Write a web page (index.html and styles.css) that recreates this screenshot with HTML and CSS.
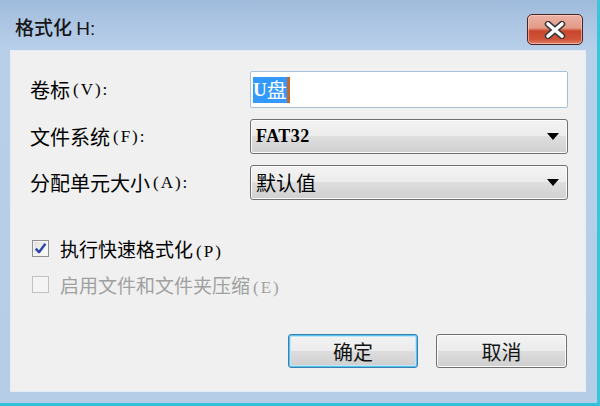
FILE: index.html
```html
<!DOCTYPE html>
<html lang="zh-CN">
<head>
<meta charset="utf-8">
<title>格式化 H:</title>
<link rel="stylesheet" href="styles.css">
</head>
<body>
<div class="window">
  <div class="titlebar">
    <div class="title">格式化 <span class="lat">H:</span></div>
    <div class="close">
      <svg width="24" height="18" viewBox="0 0 24 18">
        <path d="M5 3 L19 15 M19 3 L5 15" stroke="#3a3a3a" stroke-width="6.5" stroke-linecap="round" fill="none"/>
        <path d="M5 3 L19 15 M19 3 L5 15" stroke="#ffffff" stroke-width="3.6" stroke-linecap="round" fill="none"/>
      </svg>
    </div>
  </div>
  <div class="client">
    <div class="form">
      <div class="lbl">卷标<span class="mn">(V):</span></div>
      <div class="input"><span class="sel"><span class="u">U</span>盘</span><span class="caret"></span></div>
      <div class="lbl">文件系统<span class="mn">(F):</span></div>
      <div class="combo"><span class="val mono">FAT32</span><span class="arrow"></span></div>
      <div class="lbl">分配单元大小<span class="mn">(A):</span></div>
      <div class="combo"><span class="val">默认值</span><span class="arrow"></span></div>
    </div>
    <div class="checks">
      <div class="chk">
        <span class="box checked">
          <svg width="13" height="13" viewBox="0 0 13 13"><path d="M1.8 6.6 L5 10.2 L11.4 1.8" stroke="#2a46a8" stroke-width="2.4" fill="none" stroke-linejoin="round"/></svg>
        </span>
        <span class="ctext">执行快速格式化<span class="mn">(P)</span></span>
      </div>
      <div class="chk disabled">
        <span class="box"></span>
        <span class="ctext">启用文件和文件夹压缩<span class="mn">(E)</span></span>
      </div>
    </div>
    <div class="buttons">
      <div class="btn default">确定</div>
      <div class="btn">取消</div>
    </div>
  </div>
</div>
</body>
</html>
```

FILE: styles.css
```css
html, body {
  margin: 0;
  padding: 0;
}
body {
  width: 600px;
  height: 406px;
  overflow: hidden;
  font-family: "Noto Sans CJK SC", "Liberation Sans", sans-serif;
}
.window {
  box-sizing: border-box;
  width: 600px;
  height: 406px;
  background: linear-gradient(to bottom, #9fbbdb 0px, #adc6e3 25px, #b8cfea 50px, #b6cde8 100%);
  border-right: 3px solid #3cc4dc;
  border-bottom: 3px solid #31c2da;
  display: flex;
  flex-direction: column;
}
.titlebar {
  height: 50px;
  display: flex;
  align-items: flex-start;
  justify-content: space-between;
  flex-shrink: 0;
}
.title {
  margin-top: 13px;
  margin-left: 15px;
  font-size: 19px;
  line-height: 28px;
  font-weight: 500;
  color: #161616;
}
.title .lat {
  font-family: "Liberation Sans", sans-serif;
  font-size: 19px;
  font-weight: normal;
}
.close {
  box-sizing: border-box;
  margin-top: 14px;
  margin-right: 14px;
  width: 56px;
  height: 31px;
  border: 1px solid #4a2420;
  border-radius: 5px;
  background: linear-gradient(to bottom, #eab2a4 0%, #e39a86 45%, #c9452c 55%, #d0553a 85%, #e0836a 100%);
  box-shadow: inset 0 0 0 1px rgba(255, 220, 210, 0.55);
  display: flex;
  align-items: center;
  justify-content: center;
}
.client {
  box-sizing: border-box;
  margin: 0 11px 11px 10px;
  flex: 1;
  background: #f0f0f0;
  border: 1px solid #e4edf7;
  padding-top: 20px;
}
.form {
  display: grid;
  grid-template-columns: 220px 318px;
  grid-template-rows: 37px 35px 35px;
  row-gap: 11px;
  padding-left: 19px;
}
.lbl {
  display: flex;
  align-items: center;
  font-size: 20px;
  color: #000;
  white-space: nowrap;
}
.mn {
  font-family: "Liberation Serif", serif;
  font-size: 17px;
  letter-spacing: 2px;
  margin-left: 3px;
}
.input {
  box-sizing: border-box;
  background: #fff;
  border: 1px solid #a9c0da;
  border-radius: 2px;
  display: flex;
  align-items: center;
  padding-left: 2px;
}
.sel {
  background: #3399ff;
  color: #fff;
  font-size: 20px;
  line-height: 26px;
  height: 26px;
  display: flex;
  align-items: center;
}
.sel .u {
  font-family: "Liberation Serif", serif;
  font-weight: bold;
  font-size: 19px;
}
.caret {
  width: 3px;
  height: 26px;
  background: #c4692e;
}
.combo {
  box-sizing: border-box;
  border: 1px solid #707070;
  border-radius: 3px;
  background: linear-gradient(to bottom, #f3f3f3 0%, #ececec 50%, #dedede 50%, #d0d0d0 100%);
  box-shadow: inset 0 0 0 1px #fbfbfb;
  display: flex;
  align-items: center;
  justify-content: space-between;
  padding: 0 8px 0 5px;
}
.val {
  font-size: 20px;
  color: #000;
}
.val.mono {
  font-family: "Liberation Serif", serif;
  font-size: 18px;
  font-weight: bold;
  letter-spacing: 0.5px;
}
.arrow {
  width: 0;
  height: 0;
  border-left: 6.5px solid transparent;
  border-right: 6.5px solid transparent;
  border-top: 7px solid #000;
}
.checks {
  margin-top: 30px;
  padding-left: 21px;
  display: flex;
  flex-direction: column;
}
.chk {
  height: 36px;
  display: flex;
  align-items: center;
  gap: 11px;
}
.box {
  box-sizing: border-box;
  width: 17px;
  height: 17px;
  border: 1px solid #8e8f8f;
  background: linear-gradient(135deg, #dcdcdc 0%, #f4f4f4 60%, #ffffff 100%);
  box-shadow: inset 0 0 0 1px #f6f6f6;
  display: flex;
  align-items: center;
  justify-content: center;
}
.ctext {
  font-size: 19px;
  color: #000;
  white-space: nowrap;
}
.chk.disabled .box {
  border-color: #c2c2c2;
  background: #f4f4f4;
  box-shadow: none;
}
.chk.disabled .ctext {
  color: #a0a0a0;
}
.buttons {
  margin-top: 32px;
  display: flex;
  justify-content: flex-end;
  gap: 18px;
  padding-right: 18px;
}
.btn {
  box-sizing: border-box;
  width: 131px;
  height: 34px;
  border: 1px solid #707070;
  border-radius: 3px;
  background: linear-gradient(to bottom, #f3f3f3 0%, #ebebeb 50%, #dddddd 50%, #cfcfcf 100%);
  box-shadow: inset 0 0 0 1px #fcfcfc;
  display: flex;
  align-items: center;
  justify-content: center;
  font-size: 20px;
  color: #141414;
}
.btn.default {
  width: 130px;
  border-color: #3c7fb1;
  box-shadow: inset 0 0 0 1px #56c4ec, inset 0 0 0 2px #bfe6f6;
}
```
